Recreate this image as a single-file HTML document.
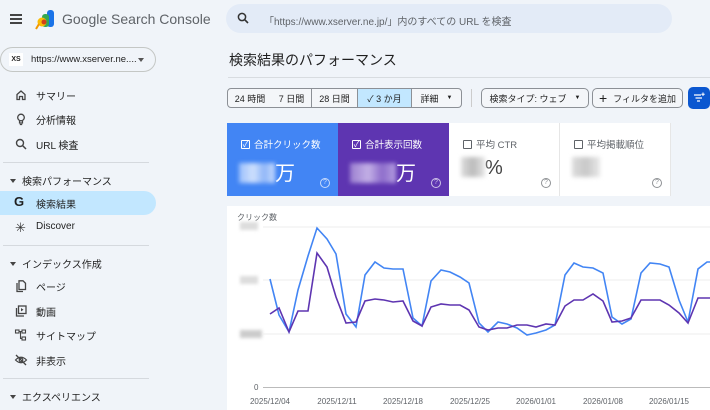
<!DOCTYPE html>
<html><head><meta charset="utf-8"><style>
*{box-sizing:border-box;margin:0;padding:0}
body{width:710px;height:410px;overflow:hidden;background:#f0f4f9;font-family:"Liberation Sans","Noto Sans CJK JP",sans-serif;color:#1f1f1f;position:relative}
.a{position:absolute}
.t{font-size:10px;color:#3c4043;white-space:nowrap}
.it{position:absolute;left:0;width:156px;height:24px}
.it .ic{position:absolute;left:14px;top:5px;width:14px;height:14px}
.it .tx{position:absolute;left:36px;top:5px;font-size:10px;color:#1f1f1f}
.hd{position:absolute;left:10px;font-size:10px;color:#1f1f1f}
.hd:before{content:"";display:inline-block;border:3px solid transparent;border-top:4px solid #444;margin-right:6px;vertical-align:-1px}
.div{position:absolute;left:3px;width:146px;height:1px;background:#d5d9de}
.btn{position:absolute;top:88px;height:20px;border:1px solid #8c9096;font-size:9px;color:#1f1f1f;display:flex;align-items:center;justify-content:center;background:#f4f6f9}
.card{position:absolute;top:123px;height:73px;width:111px}
.card .l{position:absolute;left:14px;top:14px;font-size:9.5px;display:flex;align-items:center;gap:4px}
.cb{width:9px;height:9px;border:1px solid currentColor;border-radius:1px;display:inline-block;position:relative;font-size:8px;line-height:7px;text-align:center}
.card .v{position:absolute;left:12px;top:34px;font-size:20px}
.q{position:absolute;right:8px;bottom:8px;width:10px;height:10px;border:1px solid currentColor;border-radius:50%;font-size:7px;text-align:center;line-height:8px;opacity:.7}
.blur{display:inline-block;height:20px;vertical-align:-3px;filter:blur(2px)}
</style></head><body>
<div class="a" style="left:10px;top:14px;width:12px;height:2px;background:#444;box-shadow:0 4px 0 #444,0 8px 0 #444"></div>
<svg class="a" style="left:35px;top:9px" width="20" height="21" viewBox="0 0 20 21">
<rect x="12" y="1" width="7" height="17" rx="3" fill="#1a73e8"/>
<rect x="7" y="5" width="7" height="13" rx="3" fill="#34a853"/>
<circle cx="7" cy="13" r="4.5" fill="#fbbc04"/>
<circle cx="9" cy="13" r="2.5" fill="#c5221f" opacity=".8"/>
<path d="M1 20 L4 15" stroke="#f29900" stroke-width="2"/>
</svg>
<div class="a" style="left:62px;top:11px;font-size:14px;color:#5f6368">Google Search Console</div>
<div class="a" style="left:226px;top:4px;width:446px;height:29px;border-radius:15px;background:#e3ebf7"></div>
<svg class="a" style="left:237px;top:12px" width="12" height="12" viewBox="0 0 12 12"><circle cx="5" cy="5" r="3.6" fill="none" stroke="#333" stroke-width="1.5"/><path d="M7.6 7.6 L11 11" stroke="#333" stroke-width="1.6"/></svg>
<div class="a t" style="left:264px;top:13px;color:#5f6368">「https://www.xserver.ne.jp/」内のすべての URL を検査</div>
<div class="a" style="left:0;top:47px;width:156px;height:25px;border:1px solid #c4c7c5;border-radius:13px"></div>
<div class="a" style="left:9px;top:53px;width:14px;height:13px;background:#fff;font-size:7px;text-align:center;line-height:13px;font-weight:bold">XS</div>
<div class="a" style="left:31px;top:54px;font-size:9.5px">https://www.xserver.ne....</div>
<div class="a" style="left:138px;top:58px;border:3px solid transparent;border-top:4px solid #555"></div>

<div class="it" style="top:83px"><svg class="ic" viewBox="0 0 14 14"><path d="M3 6.5 L7 3 L11 6.5 V11.5 H8.5 V8.5 H5.5 V11.5 H3 Z" fill="none" stroke="#444" stroke-width="1.3"/></svg><span class="tx">サマリー</span></div>
<div class="it" style="top:107px"><svg class="ic" viewBox="0 0 14 14"><circle cx="7" cy="5.5" r="3.3" fill="none" stroke="#444" stroke-width="1.3"/><path d="M5.5 9 V11 H8.5 V9 M5.8 12.5 H8.2" fill="none" stroke="#444" stroke-width="1.2"/></svg><span class="tx">分析情報</span></div>
<div class="it" style="top:132px"><svg class="ic" viewBox="0 0 14 14"><circle cx="6" cy="6" r="3.5" fill="none" stroke="#444" stroke-width="1.4"/><path d="M8.5 8.5 L12 12" stroke="#444" stroke-width="1.5"/></svg><span class="tx">URL 検査</span></div>
<div class="div" style="top:162px"></div>
<div class="hd" style="top:173px">検索パフォーマンス</div>
<div class="a" style="left:0;top:191px;width:156px;height:24px;background:#c2e7ff;border-radius:0 12px 12px 0"></div>
<div class="it" style="top:191px"><span class="a" style="left:14px;top:3px;font-size:13px;font-weight:bold;color:#1f1f1f">G</span><span class="tx">検索結果</span></div>
<div class="it" style="top:216px"><span class="a" style="left:15px;top:4px;font-size:13px;color:#333">✳</span><span class="tx">Discover</span></div>
<div class="div" style="top:245px"></div>
<div class="hd" style="top:256px">インデックス作成</div>
<div class="it" style="top:274px"><svg class="ic" viewBox="0 0 14 14"><path d="M3 4 V12.5 H9 M5 1.8 H9 L11.5 4.3 V10.5 H5 Z" fill="none" stroke="#444" stroke-width="1.3"/></svg><span class="tx">ページ</span></div>
<div class="it" style="top:299px"><svg class="ic" viewBox="0 0 14 14"><path d="M2.5 4 V12 H10" fill="none" stroke="#444" stroke-width="1.3"/><rect x="4.5" y="2" width="7.5" height="7.5" fill="none" stroke="#444" stroke-width="1.3"/><path d="M7 4 L9.5 5.7 L7 7.4Z" fill="#444"/></svg><span class="tx">動画</span></div>
<div class="it" style="top:323px"><svg class="ic" viewBox="0 0 14 14"><rect x="1.5" y="2" width="3.5" height="3" fill="none" stroke="#444" stroke-width="1.1"/><rect x="8" y="2" width="3.5" height="3" fill="none" stroke="#444" stroke-width="1.1"/><rect x="8" y="9" width="3.5" height="3" fill="none" stroke="#444" stroke-width="1.1"/><path d="M5 3.5 H8 M6.5 3.5 V10.5 H8" fill="none" stroke="#444" stroke-width="1.1"/></svg><span class="tx">サイトマップ</span></div>
<div class="it" style="top:348px"><svg class="ic" viewBox="0 0 14 14"><path d="M1.5 7 Q7 1.5 12.5 7 Q7 12.5 1.5 7Z" fill="none" stroke="#444" stroke-width="1.2"/><circle cx="7" cy="7" r="1.8" fill="none" stroke="#444" stroke-width="1.2"/><path d="M2 2 L12 12" stroke="#444" stroke-width="1.3"/></svg><span class="tx">非表示</span></div>
<div class="div" style="top:378px"></div>
<div class="hd" style="top:389px">エクスペリエンス</div>

<div class="a" style="left:229px;top:50px;font-size:14px;color:#1f1f1f">検索結果のパフォーマンス</div>
<div class="a" style="left:228px;top:77px;width:482px;height:1px;background:#d8dce0"></div>
<div class="btn" style="left:227px;width:46px;border-radius:4px 0 0 4px">24 時間</div>
<div class="btn" style="left:272px;width:40px;border-left:none">7 日間</div>
<div class="btn" style="left:312px;width:46px;border-left:none">28 日間</div>
<div class="btn" style="left:358px;width:54px;border-left:none;background:#c2e7ff">✓ 3 か月</div>
<div class="btn" style="left:412px;width:50px;border-left:none;border-radius:0 4px 4px 0">詳細 <span style="font-size:6px;margin-left:8px">▼</span></div>
<div class="a" style="left:471px;top:89px;width:1px;height:18px;background:#ccc"></div>
<div class="btn" style="left:481px;width:108px;border-radius:5px">検索タイプ: ウェブ <span style="font-size:6px;margin-left:8px">▼</span></div>
<div class="btn" style="left:592px;width:91px;border-radius:5px"><span style="font-size:14px;margin-right:6px;line-height:1">+</span>フィルタを追加</div>
<div class="a" style="left:688px;top:87px;width:22px;height:22px;background:#0b57d0;border-radius:5px"></div>
<svg class="a" style="left:693px;top:92px" width="12" height="12" viewBox="0 0 12 12"><path d="M1 3H8 M2.5 6H9 M4 9H7" stroke="#fff" stroke-width="1.3"/><path d="M10 0.5V4 M8.3 2.2H11.7" stroke="#fff" stroke-width="1"/></svg>

<div class="card" style="left:227px;background:#4285f4;color:#fff"><div class="l"><span class="cb">✓</span>合計クリック数</div><div class="v"><span class="blur" style="width:36px;background:linear-gradient(90deg,#9cc0fb,#cfe0fd 40%,#8fb6f8 70%,#c6dafd)"></span>万</div><div class="q">?</div></div>
<div class="card" style="left:338px;background:#5e35b1;color:#fff"><div class="l"><span class="cb">✓</span>合計表示回数</div><div class="v"><span class="blur" style="width:46px;background:linear-gradient(90deg,#9b7fd0,#c3b0e6 40%,#8d6ccb 70%,#b49ddf)"></span>万</div><div class="q">?</div></div>
<div class="card" style="left:449px;background:#fff;color:#5f6368;border-right:1px solid #e6e6e6"><div class="l"><span class="cb"></span>平均 CTR</div><div class="v" style="color:#444"><span class="blur" style="width:24px;background:linear-gradient(90deg,#ddd,#bbb 50%,#e6e6e6)"></span>%</div><div class="q">?</div></div>
<div class="card" style="left:560px;background:#fff;color:#5f6368;border-right:1px solid #e6e6e6"><div class="l"><span class="cb"></span>平均掲載順位</div><div class="v"><span class="blur" style="width:28px;background:linear-gradient(90deg,#ddd,#c8c8c8 50%,#e8e8e8)"></span></div><div class="q">?</div></div>

<div class="a" style="left:227px;top:206px;width:483px;height:204px;background:#fff"></div>
<div class="a" style="left:237px;top:212px;font-size:8px;color:#5f6368">クリック数</div>
<div class="a" style="left:240px;top:222px;width:18px;height:8px;background:#ddd;filter:blur(1.5px)"></div>
<div class="a" style="left:240px;top:276px;width:18px;height:8px;background:#ddd;filter:blur(1.5px)"></div>
<div class="a" style="left:240px;top:330px;width:22px;height:8px;background:#ccc;filter:blur(1.5px)"></div>
<div class="a" style="left:254px;top:383px;font-size:8px;color:#5f6368">0</div>
<svg class="a" style="left:0;top:0" width="710" height="410">
<g stroke="#eee" stroke-width="1"><path d="M263 227H710M263 280H710M263 334H710"/></g>
<path d="M263 387.5H710" stroke="#bbb" stroke-width="1"/>
<polyline fill="none" stroke="#4285f4" stroke-width="1.6" points="270,279 279,315 289,332 298,290 308,256 317,228 327,239 336,254 346,314 356,327 365,275 375,262 384,268 393,269 403,269 413,318 422,326 431,281 441,270 450,272 460,277 469,283 479,323 488,332 498,322 507,324 517,328 527,335 536,333 546,330 555,325 565,275 574,263 583,267 593,268 603,273 612,317 622,324 631,319 641,273 650,263 660,264 669,267 679,300 688,322 698,269 707,262 710,262"/>
<polyline fill="none" stroke="#5e35b1" stroke-width="1.6" points="270,314 279,308 289,332 298,311 308,311 317,253 327,267 336,297 346,323 356,322 365,301 375,299 384,300 393,302 403,301 413,321 422,326 431,307 441,304 450,305 460,305 469,310 479,327 488,330 498,328 507,328 517,325 527,325 536,327 546,324 555,325 565,306 574,300 583,300 593,294 603,301 612,322 622,321 631,318 641,300 650,300 660,300 669,305 679,313 688,323 698,298 707,298 710,298"/>
<g font-size="8" fill="#5f6368" font-family="Liberation Sans, sans-serif" text-anchor="middle">
<text x="270" y="404">2025/12/04</text><text x="337" y="404">2025/12/11</text><text x="403" y="404">2025/12/18</text><text x="470" y="404">2025/12/25</text><text x="536" y="404">2026/01/01</text><text x="603" y="404">2026/01/08</text><text x="669" y="404">2026/01/15</text>
</g>
</svg>
</body></html>
